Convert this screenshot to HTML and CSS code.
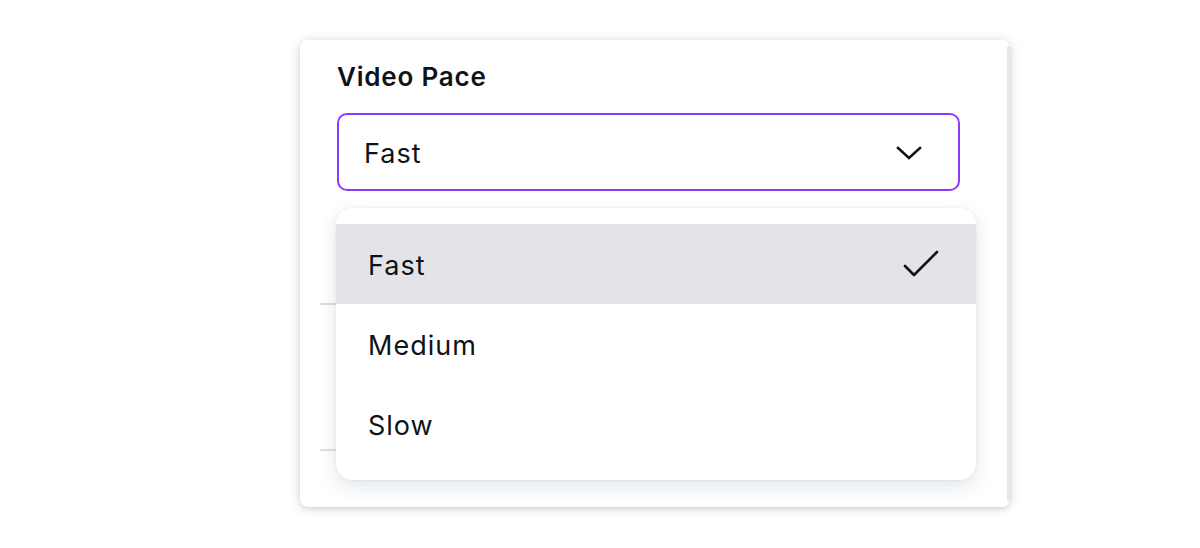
FILE: index.html
```html
<!DOCTYPE html>
<html>
<head>
<meta charset="utf-8">
<link rel="stylesheet" href="styles.css">
</head>
<body>
<div class="stage">
  <div class="card">
    <div class="card-body">
      <h2 class="title">Video Pace</h2>
      <div class="select">
        <span class="select-value">Fast</span>
        <svg class="chev" width="26" height="16" viewBox="0 0 26 16"><path d="M2 3 L13 13 L24 3" fill="none" stroke="#111" stroke-width="2.6" stroke-linecap="square"/></svg>
      </div>
      <div class="behind">
        <div class="sep sep1"></div>
        <div class="sep sep2"></div>
      </div>
      <ul class="menu">
        <li class="opt active"><span>Fast</span>
          <svg class="check" width="38" height="28" viewBox="0 0 38 28"><path d="M3 16 L12 25 L35 2" fill="none" stroke="#111" stroke-width="2.6" stroke-linecap="round" stroke-linejoin="round"/></svg>
        </li>
        <li class="opt"><span>Medium</span></li>
        <li class="opt"><span>Slow</span></li>
      </ul>
    </div>
    <div class="scrollbar"></div>
  </div>
</div>
</body>
</html>
```
FILE: styles.css
```css
* { box-sizing: border-box; }
html, body { margin: 0; padding: 0; background: #fff; }
body { font-family: "Inter", "Noto Sans", sans-serif; color: #0e1318; min-height: 548px; }
.stage { padding: 40px 0 0 300px; }
.card {
  position: relative;
  width: 710px;
  height: 467px;
  background: #fff;
  border-radius: 8px;
  box-shadow: 0 1px 12px rgba(0,0,0,0.16), 0 2px 4px rgba(0,0,0,0.08);
  display: flex;
}
.card-body { position: relative; flex: 1; padding: 0 0 0 37px; }
.scrollbar { width: 3px; margin: 6px 0; background: #e6e7ea; border-radius: 2px; }
.title {
  margin: 0;
  padding-top: 22px;
  height: 73px;
  font-size: 26px;
  font-weight: 600;
  line-height: 30px;
  letter-spacing: 0.8px;
}
.select {
  width: 623px;
  height: 78px;
  border: 2px solid #8b3dff;
  border-radius: 10px;
  display: flex;
  align-items: center;
  justify-content: space-between;
  padding: 0 36px 0 25px;
}
.select-value { font-size: 27px; line-height: 30px; letter-spacing: 1px; padding-top: 3px; }
.chev { display: block; margin-top: 2px; }
.sep { position: absolute; left: 20px; width: 40px; height: 2px; background: #dedfe3; }
.sep1 { top: 263px; }
.sep2 { top: 409px; }
.menu {
  position: absolute;
  left: 36px;
  top: 168px;
  width: 640px;
  margin: 0;
  padding: 16px 0;
  list-style: none;
  background: #fff;
  border-radius: 16px;
  box-shadow: 0 6px 18px rgba(64,87,109,0.16), 0 0 2px rgba(64,87,109,0.12);
}
.opt {
  height: 80px;
  display: flex;
  align-items: center;
  justify-content: space-between;
  padding: 0 36px 0 32px;
  font-size: 27px;
  line-height: 30px;
  letter-spacing: 1px;
}
.opt span { padding-top: 3px; }
.opt.active { background: #e3e4e8; }
.check { display: block; }
```
